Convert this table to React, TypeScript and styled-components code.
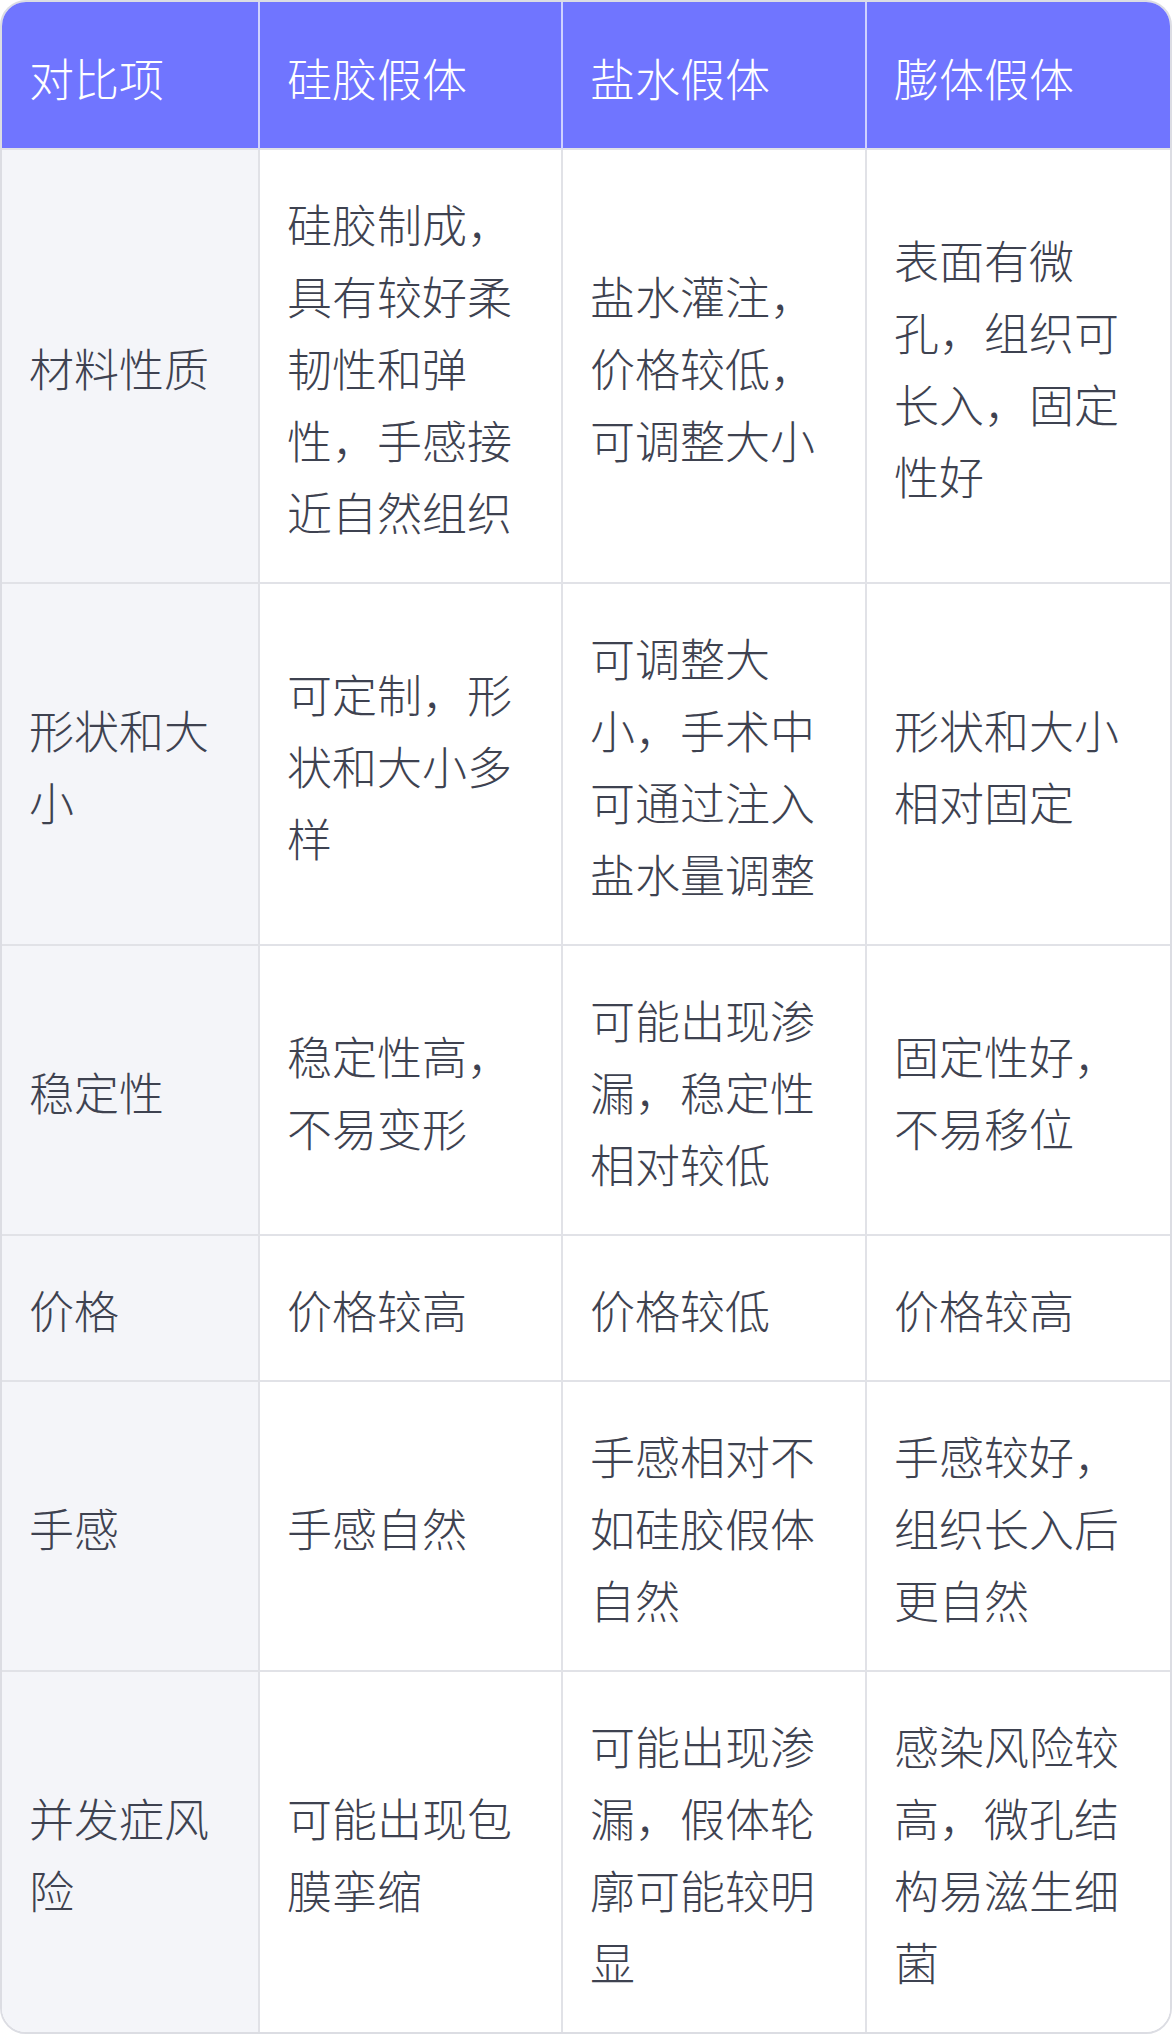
import React from 'react';
import styled, { createGlobalStyle } from 'styled-components';

const GlobalStyle = createGlobalStyle`
	html, body {
		margin: 0;
		padding: 0;
		background: #ffffff;
	}

	body {
		font-family: 'Noto Sans CJK SC', 'Noto Sans', sans-serif;
	}
`;

const Wrapper = styled.div`
	width: 1172px;
	box-sizing: border-box;
	border: 2px solid #dcdde3;
	border-radius: 26px;
	overflow: hidden;
	background: #ffffff;
`;

const Grid = styled.div`
	display: grid;
	grid-template-columns: 258px 303px 304px 1fr;
`;

const Cell = styled.div<{ $head?: boolean; $first?: boolean; $last?: boolean; $bottom?: boolean }>`
	display: flex;
	align-items: center;
	box-sizing: border-box;
	padding: ${(p) => (p.$head ? '40px 28px 34px 27px' : '38px 28px 34px 27px')};

	border-right: ${(p) => (p.$last ? 'none' : p.$head ? '2px solid #cfd1ff' : '2px solid #e1e2e7')};
	border-bottom: ${(p) => (p.$bottom ? 'none' : '2px solid #e1e2e7')};

	background: ${(p) => (p.$head ? '#7075ff' : p.$first ? '#f4f5f9' : '#ffffff')};
	color: ${(p) => (p.$head ? '#ffffff' : '#3e4250')};

	font-size: 45px;
	line-height: 72px;
	font-weight: 300;
	word-break: break-all;
`;

const head = ['对比项', '硅胶假体', '盐水假体', '膨体假体'];

const rows: string[][] = [
	['材料性质', '硅胶制成，具有较好柔韧性和弹性，手感接近自然组织', '盐水灌注，价格较低，可调整大小', '表面有微孔，组织可长入，固定性好'],
	['形状和大小', '可定制，形状和大小多样', '可调整大小，手术中可通过注入盐水量调整', '形状和大小相对固定'],
	['稳定性', '稳定性高，不易变形', '可能出现渗漏，稳定性相对较低', '固定性好，不易移位'],
	['价格', '价格较高', '价格较低', '价格较高'],
	['手感', '手感自然', '手感相对不如硅胶假体自然', '手感较好，组织长入后更自然'],
	['并发症风险', '可能出现包膜挛缩', '可能出现渗漏，假体轮廓可能较明显', '感染风险较高，微孔结构易滋生细菌'],
];

const App: React.FC = () => {
	return (
		<React.Fragment>
			<GlobalStyle />
			<Wrapper>
				<Grid>
					{head.map((title, i) => (
						<Cell key={'h' + i} $head $last={i === head.length - 1}>
							{title}
						</Cell>
					))}
					{rows.map((row, r) =>
						row.map((text, c) => (
							<Cell
								key={r + '-' + c}
								$first={c === 0}
								$last={c === row.length - 1}
								$bottom={r === rows.length - 1}
							>
								{text}
							</Cell>
						))
					)}
				</Grid>
			</Wrapper>
		</React.Fragment>
	);
};

export default App;
